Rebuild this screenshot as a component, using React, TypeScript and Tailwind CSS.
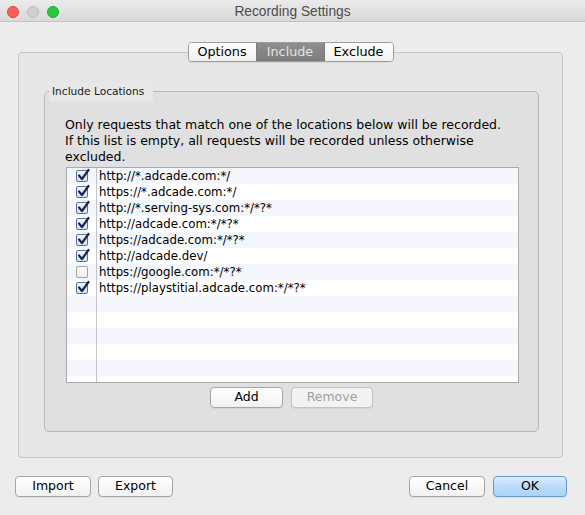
import React from "react";

const items: [string, boolean][] = [
  ["http://*.adcade.com:*/", true],
  ["https://*.adcade.com:*/", true],
  ["http://*.serving-sys.com:*/*?*", true],
  ["http://adcade.com:*/*?*", true],
  ["https://adcade.com:*/*?*", true],
  ["http://adcade.dev/", true],
  ["https://google.com:*/*?*", false],
  ["https://playstitial.adcade.com:*/*?*", true],
];

function CheckBox({ checked }: { checked: boolean }) {
  if (!checked) {
    return (
      <div className="w-[12px] h-[12px] rounded-[2px] border border-[#a3a3a3] bg-gradient-to-b from-[#ffffff] to-[#f0f0f0]" />
    );
  }
  return (
    <div className="relative w-[12px] h-[12px] rounded-[2px] border border-[#55759f] bg-gradient-to-b from-[#f4f8fd] to-[#cfe0f4]">
      <svg
        className="absolute left-[-1px] top-[-3px] overflow-visible"
        width="14"
        height="14"
        viewBox="0 0 14 14"
      >
        <path
          d="M3 7.5 L6 11 L12.5 2"
          fill="none"
          stroke="#13294b"
          strokeWidth="2.2"
          strokeLinecap="round"
          strokeLinejoin="round"
        />
      </svg>
    </div>
  );
}

function Btn({
  children,
  w,
  disabled,
  primary,
}: {
  children: React.ReactNode;
  w: string;
  disabled?: boolean;
  primary?: boolean;
}) {
  const base =
    "h-[21px] rounded-[4px] border flex items-center justify-center text-[12.5px] font-['DejaVu_Sans',sans-serif] shadow-[0_1px_0_rgba(0,0,0,0.05)]";
  let cls = "border-[#a4a4a4] bg-gradient-to-b from-[#ffffff] to-[#f1f1f1] text-black";
  if (disabled) cls = "border-[#c3c3c3] bg-[#f2f2f2] text-[#9f9f9f]";
  if (primary)
    cls = "border-[#6a98cc] bg-gradient-to-b from-[#dcedfd] via-[#b9dcfa] to-[#a9d4f8] text-black";
  return <div className={`${base} ${cls} ${w}`}>{children}</div>;
}

export default function App() {
  const rows = [...items.map((i) => i as [string, boolean] | null)];
  while (rows.length < 14) rows.push(null);

  return (
    <div className="w-[585px] h-[515px] bg-[#ececec] overflow-hidden font-['DejaVu_Sans',sans-serif]">
      {/* Title bar */}
      <div className="relative h-[22px] bg-gradient-to-b from-[#ebebeb] to-[#d9d9d9] border-b border-[#c2c2c2] flex items-center justify-center pt-[3px]">
        <div className="absolute left-[7px] top-[6px] flex gap-[8px]">
          <div className="w-[12px] h-[12px] rounded-full bg-[#fc5f57] border border-[#e0443e]" />
          <div className="w-[12px] h-[12px] rounded-full bg-[#d0d0d0] border border-[#bdbdbd]" />
          <div className="w-[12px] h-[12px] rounded-full bg-[#29c840] border border-[#1aab29]" />
        </div>
        <span className="text-[13.75px] text-[#4d4d4d] font-['Liberation_Sans',sans-serif]">
          Recording Settings
        </span>
      </div>

      {/* Outer tab panel */}
      <div className="ml-[18px] mt-[30px] w-[545px] h-[406px] rounded-[4px] border border-[#c7c7c7] bg-[#e6e6e6] flex flex-col">
        <div className="-mt-[11px] flex justify-center">
          <div className="flex h-[20px] rounded-[4px] border border-[#9c9c9c] overflow-hidden text-[12.75px] shadow-[0_1px_0_rgba(0,0,0,0.06)]">
            <div className="w-[67px] flex items-center justify-center bg-gradient-to-b from-[#ffffff] to-[#f0f0f0] text-black">
              Options
            </div>
            <div className="w-[69px] flex items-center justify-center bg-gradient-to-b from-[#8f8f8f] to-[#7c7c7c] text-[#e4e4e4] border-x border-[#7a7a7a]">
              Include
            </div>
            <div className="w-[68px] flex items-center justify-center bg-gradient-to-b from-[#ffffff] to-[#f0f0f0] text-black">
              Exclude
            </div>
          </div>
        </div>

        {/* Group box */}
        <div className="mt-[29px] ml-[25px] w-[495px] rounded-[5px] border border-[#b7b7b7] bg-[#e0e0e0] flex flex-col pl-[20px] pb-[23px]">
          <div className="-mt-[10px] -ml-[16px] h-[19px] w-[104px] bg-[#e8e8e8] pl-[3px] flex items-center text-[10.6px] text-[#1a1a1a]">
            Include Locations
          </div>
          <div className="mt-[16px] text-[12.5px] leading-[16px] text-black">
            Only requests that match one of the locations below will be recorded.
            <br />
            If this list is empty, all requests will be recorded unless otherwise
            <br />
            excluded.
          </div>
          <div className="mt-[2px] ml-[1px] w-[453px] h-[216px] border border-[#a9a9a9] bg-white overflow-hidden">
            {rows.map((r, i) => (
              <div
                key={i}
                className={`flex h-[16px] ${i % 2 === 0 ? "bg-[#f3f6fa]" : "bg-white"}`}
              >
                <div className="w-[30px] border-r border-[#c4c4c4] flex items-center justify-center">
                  {r && <CheckBox checked={r[1]} />}
                </div>
                <div className="pl-[2px] flex items-center text-[11.75px] text-black leading-[16px]">
                  {r ? r[0] : ""}
                </div>
              </div>
            ))}
          </div>
          <div className="mt-[4px] flex justify-center gap-[8px] -ml-[20px]">
            <Btn w="w-[73px]">Add</Btn>
            <Btn w="w-[82px]" disabled>
              Remove
            </Btn>
          </div>
        </div>
      </div>

      {/* Bottom buttons */}
      <div className="mt-[18px] flex px-[15px] pr-[18px]">
        <div className="flex gap-[7px]">
          <Btn w="w-[76px]">Import</Btn>
          <Btn w="w-[75px]">Export</Btn>
        </div>
        <div className="ml-auto flex gap-[8px]">
          <Btn w="w-[76px]">Cancel</Btn>
          <Btn w="w-[74px]" primary>
            OK
          </Btn>
        </div>
      </div>
    </div>
  );
}
